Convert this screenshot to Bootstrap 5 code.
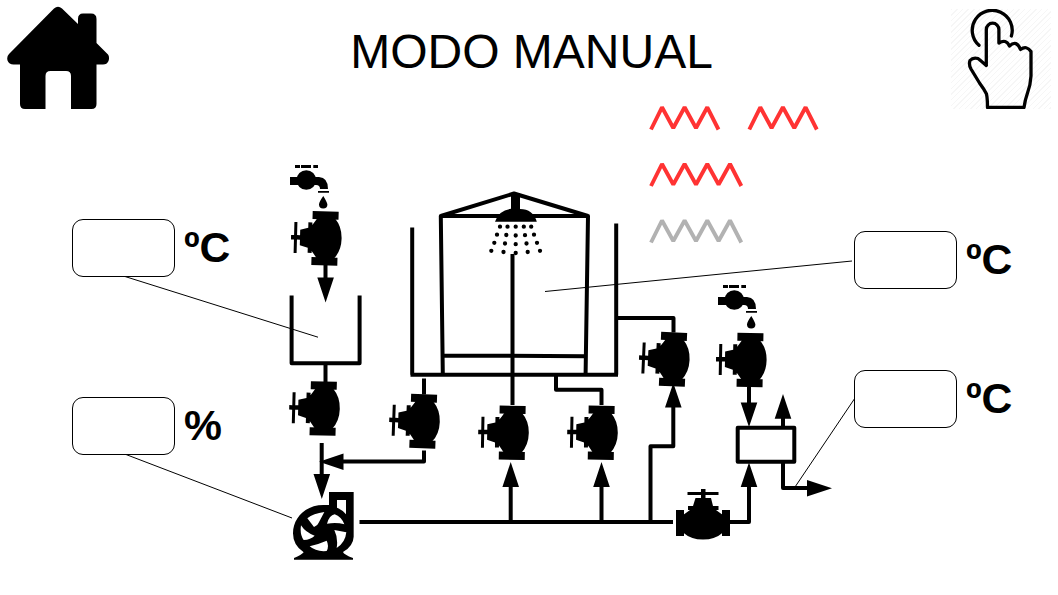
<!DOCTYPE html>
<html lang="pt">
<head>
<meta charset="utf-8">
<meta name="viewport" content="width=device-width, initial-scale=1">
<title>Modo manual</title>
<link href="https://cdn.jsdelivr.net/npm/bootstrap@5.3.0/dist/css/bootstrap.min.css" rel="stylesheet">
<style>
  body { font-family: "Liberation Sans", Arial, sans-serif; color: #000; background: #fff; }
  .panel { width: 1058px; height: 595px; }
  .topbar { height: 110px; }
  .title { font-size: 48px; line-height: 55px; margin: 24px 0 0 2px; font-weight: 400; }
  .home { margin: 6px 0 0 6px; }
  .touch { margin: 9px 7px 0 0; width: 100px; height: 100px;
    background: repeating-linear-gradient(135deg, #f6f6f6 0 1px, #fff 1px 4px); }
  .plant { left: 0; top: 0; }
  .reading { gap: 9px; height: 57px; }
  .reading output { width: 103px; height: 58px; border: 1px solid #000; border-radius: 11px; background: #fff; }
  .unit { font-size: 42.67px; font-weight: 700; line-height: 57px; white-space: nowrap; }
  .r1 { left: 72px; top: 219px; }
  .r2 { left: 72px; top: 397px; }
  .r3 { left: 854px; top: 231px; }
  .r4 { left: 854px; top: 370px; }
</style>
</head>
<body>
<main class="panel position-relative overflow-hidden">
  <header class="topbar d-flex justify-content-between align-items-start">
    <a class="home d-block" href="#" aria-label="Home">
      <svg class="d-block" width="104" height="104" viewBox="6 6 104 104">
        <path d="M54 8.500Q58 5 62 8.500L78 24V19Q78 13.500 83 13.500H91Q96.500 13.500 96.500 19V43L108 54.500Q109.800 57 108.500 61Q107 64.500 103 64.500H96.500V104Q96.500 109 91.500 109H71V76Q71 71 66 71H50.500Q45.500 71 45.500 76V109H25Q20 109 20 104V64.500H13.500Q9 64.500 7.500 60.500Q6.500 56.500 9 54Z"/>
      </svg>
    </a>
    <h1 class="title">MODO MANUAL</h1>
    <div class="touch">
      <svg class="d-block" width="100" height="100" viewBox="951 9 100 100" fill="none" stroke="#000" stroke-width="3.300" stroke-linecap="round" stroke-linejoin="round">
        <path d="M979 45.300A20 20 0 1 1 1011.400 36"/>
        <path d="M986.300 65V29.500A6.300 6.300 0 0 1 998.900 29.500V43Q1006 38.500 1009.500 46Q1016.500 39.500 1020.500 49.500Q1026.500 45 1031 51.500V76Q1030.500 85 1027.500 93Q1025 100 1024 107.500H987.500Q987.500 99 986.500 94Q984 89 979.500 83L971 69Q968.500 64.500 970 60.500Q973 57 978 58.500Q980 60 986.300 65.500"/>
      </svg>
    </div>
  </header>

  <svg class="plant position-absolute pe-none" width="1058" height="595" viewBox="0 0 1058 595">
    <defs>
      <g id="valve">
        <path d="M-27-13h8v26h-8zM19-13h8v26h-8z"/>
        <path d="M-20-8Q-17-10-13-13H-15V-17H-10L-7.500-25H-2V-28H-15.500V-31H-2V-34H2.500V-31H15.500V-28H2.500V-25H8L10-17H15.500V-13H13Q17-10 20-8V9.500Q12 16.600 0 16.600T-20 9.500Z"/>
      </g>
      <g id="tap">
        <path d="M295 165h5v3h-5zM301 165h10v3h-10zM313.300 165h4.700v3h-4.700zM318 191h11v1.800h-11z"/>
        <circle cx="306.300" cy="180" r="9.800"/>
        <path d="M290 177H319Q328 177.500 328 189H320Q320 185 316 185H290zM323.300 196Q319 202 319 204.500A4 3.800 0 0 0 327.400 204.500Q327 202 323.300 196Z"/>
      </g>
    </defs>

    <!-- callout leaders -->
    <path d="M125 276.500L318 337.200M126 454.500L292 518M852 261L545 291.500M855 398L795 487" fill="none" stroke="#000" stroke-width="1"/>

    <!-- pipes and tanks -->
    <g fill="none" stroke="#000" stroke-width="4" stroke-linejoin="round">
      <path d="M291.600 295.500V363.300H359.600V295.500"/>
      <path d="M325.500 265V280M325.500 363V382M321.700 443V475M424 378.500V394.500M424 450.500V461.500H342"/>
      <path d="M412.200 227.500V374.800M616.200 223.500V374.800M410.500 374.800H618"/>
      <path d="M442.800 374L440.800 216H588L585.600 374M440.800 216L514 193.500L588 216M443 355.500L586 356.200"/>
      <path d="M512.500 254V405M556 375V389.800H601.500V405M616.500 318H673.500V332.500"/>
      <path d="M359.500 522H673M510.700 522V486M601.500 522V486M650.500 522V446.300H673.300V406M730 522H749V486"/>
      <path d="M749 387V404M783 428V418M783 462V488H808"/>
      <rect x="737.700" y="427.700" width="56.600" height="34"/>
    </g>
    <path d="M317.300 277.500h16.600L325.600 302.500zM313.500 474h16.600L321.800 499zM319 461.700L343.500 453.400V470zM502.400 487h16.600L510.700 462zM593.200 487h16.600L601.500 462zM665 407.500h16.600L673.300 383zM740.700 402.500h16.600L749 427zM774.700 418.700h16.600L783 394zM740.700 487h16.600L749 462.500zM807 480v16.600L832 488.300z"/>

    <!-- shower -->
    <path d="M511 195h9v14Q533 209 536.800 221.700H495Q499 210 511 208.800Z"/>
    <path d="M500 226.700h.01M507.500 226.700h.01M515.700 226.700h.01M523.800 226.700h.01M531.200 226.700h.01M497 234.700h.01M506.300 235h.01M515.700 235.500h.01M525 235.200h.01M534 234.700h.01M494.300 242.800h.01M505 243.500h.01M515.700 244.200h.01M526.500 243.500h.01M537 242.800h.01M491.300 250.800h.01M503.500 252h.01M515.700 253h.01M527.700 252h.01M540 250.800h.01" fill="none" stroke="#000" stroke-width="4.300" stroke-linecap="round"/>

    <use href="#tap"/>
    <use href="#tap" x="428" y="120"/>

    <use href="#valve" transform="translate(325 238.300) rotate(-88.500)"/>
    <use href="#valve" transform="translate(323.200 408.500) rotate(-88.500)"/>
    <use href="#valve" transform="translate(423.200 421.300) rotate(-88)"/>
    <use href="#valve" transform="translate(512.200 432.800) rotate(-89)"/>
    <use href="#valve" transform="translate(601.200 432.800) rotate(-89)"/>
    <use href="#valve" transform="translate(673 359.300) rotate(-87.500)"/>
    <use href="#valve" transform="translate(750 360) rotate(-89)"/>
    <use href="#valve" transform="translate(703 523)"/>

    <!-- pump, drawn on a 3x grid -->
    <g transform="translate(270 440) scale(.33333)">
      <path d="M177 156H251V290Q250 318 219 336Q222 344 249 354V359H72V354Q95 345 101 337Q69 316 69 280C69 235 105 195 160 195H177Z"/>
      <path fill="#fff" d="M201 180H228V223Q216 209 201 203ZM112 235Q130 220 163 216L146 248Q143 257 132 261ZM171 251Q178 226 194 223Q214 230 223 253Q200 246 171 251ZM193 270L229 277Q226 308 200 324Q205 295 193 270ZM119 319Q147 312 170 302Q178 318 170 333Q138 336 119 319ZM93 256Q107 278 134 287Q122 299 101 300Q89 285 93 256Z"/>
    </g>

    <!-- heating elements -->
    <g fill="none" stroke="#ff3333" stroke-width="3.900" stroke-linejoin="bevel">
      <path id="coil3" d="M651 129.500L662 107.300L673.300 128L684.600 107.300L696 128L707.300 107.300L718.500 129.500"/>
      <use href="#coil3" x="98.300"/>
      <path id="coil4" d="M651 186L662 164L673.300 184.500L684.600 164L696 184.500L707.300 164L718.600 184.500L730 164L741.300 186"/>
      <path stroke="#b2b2b2" d="M651 242.500L662 220.500L673.300 241L684.600 220.500L696 241L707.300 220.500L718.600 241L730 220.500L741.300 242.500"/>
    </g>
  </svg>

  <div class="reading r1 position-absolute d-flex"><output></output><span class="unit">ºC</span></div>
  <div class="reading r2 position-absolute d-flex"><output></output><span class="unit">%</span></div>
  <div class="reading r3 position-absolute d-flex"><output></output><span class="unit">ºC</span></div>
  <div class="reading r4 position-absolute d-flex"><output></output><span class="unit">ºC</span></div>
</main>
<script src="https://cdn.jsdelivr.net/npm/bootstrap@5.3.0/dist/js/bootstrap.bundle.min.js"></script>
</body>
</html>
